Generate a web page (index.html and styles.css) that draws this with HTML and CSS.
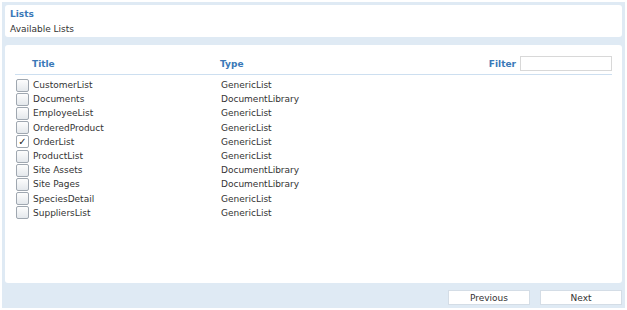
FILE: index.html
```html
<!DOCTYPE html>
<html lang="en">
<head>
  <meta charset="UTF-8">
  <title>Lists</title>
  <link rel="stylesheet" href="styles.css">
</head>
<body>
<div class="frame">
  <div class="card head-card">
    <div class="head-title">Lists</div>
    <div class="head-sub">Available Lists</div>
  </div>

  <div class="card list-card">
    <div class="list-row list-header">
      <span class="col-title">Title</span>
      <span class="col-type">Type</span>
      <span class="filter">
        <label for="filter">Filter</label>
        <input type="text" id="filter">
      </span>
    </div>
    <div id="list-body"></div>
  </div>

  <div class="pager">
    <button type="button">Previous</button>
    <button type="button">Next</button>
  </div>
</div>

<script>
  // lists on the site
  const lists = [
    { title: 'CustomerList', type: 'GenericList' },
    { title: 'Documents', type: 'DocumentLibrary' },
    { title: 'EmployeeList', type: 'GenericList' },
    { title: 'OrderedProduct', type: 'GenericList' },
    { title: 'OrderList', type: 'GenericList', checked: true },
    { title: 'ProductList', type: 'GenericList' },
    { title: 'Site Assets', type: 'DocumentLibrary' },
    { title: 'Site Pages', type: 'DocumentLibrary' },
    { title: 'SpeciesDetail', type: 'GenericList' },
    { title: 'SuppliersList', type: 'GenericList' }
  ];

  const body = document.getElementById('list-body');
  lists.forEach(item => {
    const row = document.createElement('div');
    row.className = 'list-row item';

    const box = document.createElement('span');
    box.className = 'check' + (item.checked ? ' on' : '');
    if (item.checked) box.textContent = '\u2713';

    const title = document.createElement('span');
    title.className = 'col-title';
    title.textContent = item.title;

    const type = document.createElement('span');
    type.className = 'col-type';
    type.textContent = item.type;

    row.appendChild(box);
    row.appendChild(title);
    row.appendChild(type);
    body.appendChild(row);
  });
</script>
</body>
</html>
```

FILE: styles.css
```css
body {
  margin: 0;
  padding: 2px;
  font-family: "DejaVu Sans", Verdana, sans-serif;
  font-size: 9px;
  color: #333;
  background: #fff;
}

.frame {
  width: 623px;
  height: 306px;
  background: #dfeaf4;
  padding: 3px;
  box-sizing: border-box;
}

.card {
  background: #fff;
  border-radius: 3px;
}

.head-card {
  height: 32px;
  padding: 3px 5px 0;
  box-sizing: border-box;
}

.head-title {
  color: #3a79b8;
  font-weight: bold;
  line-height: 12px;
}

.head-sub {
  margin-top: 3px;
  line-height: 12px;
}

.list-card {
  margin-top: 8px;
  height: 238px;
  padding: 8px 10px 0 10px;
  box-sizing: border-box;
}

.list-row {
  display: flex;
  align-items: center;
}

.list-header {
  height: 21px;
  border-bottom: 1px solid #cddff0;
  color: #3a79b8;
  font-weight: bold;
  margin-bottom: 3px;
}

.col-title {
  width: 188px;
  padding-left: 17px;
}

.item .col-title {
  padding-left: 4px;
}

.filter {
  margin-left: auto;
  display: flex;
  align-items: center;
  gap: 4px;
}

.filter input {
  width: 92px;
  height: 15px;
  border: 1px solid #d8d8d8;
  padding: 0;
  box-sizing: border-box;
}

.item {
  height: 14.2px;
}

.check {
  width: 11px;
  height: 11px;
  margin-left: 1px;
  border: 1px solid #9fa7b0;
  border-radius: 2px;
  background: linear-gradient(#fdfdfd, #e4e8ec);
  font-size: 10px;
  line-height: 11px;
  text-align: center;
  color: #222;
}

.check.on {
  background: #fff;
}

.pager {
  display: flex;
  justify-content: flex-end;
  gap: 10px;
  margin-top: 7px;
}

.pager button {
  width: 82px;
  height: 15px;
  background: #fff;
  border: 1px solid #d4dde6;
  font-family: inherit;
  font-size: 9px;
  color: #333;
  padding: 0;
}
```
